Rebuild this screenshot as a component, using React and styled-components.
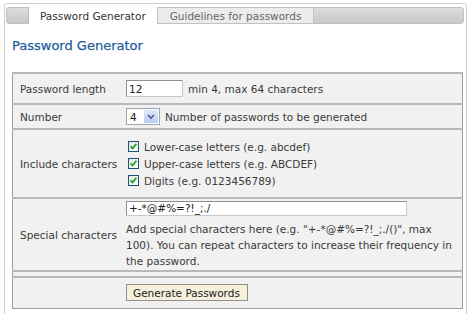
import React from "react";
import styled, { createGlobalStyle } from "styled-components";

const Global = createGlobalStyle`
  html, body { margin: 0; padding: 0; background: #fff; }
  body { font-family: "DejaVu Sans", Verdana, sans-serif; font-size: 10.5px; color: #3a3a3a; }
`;

const Page = styled.div`
  padding: 3px 7px 0 4px;
  height: 311px;
  overflow: hidden;
`;

const Panel = styled.div`
  border: 1px solid #cfcfcf;
  border-radius: 3px 3px 0 0;
  padding: 3px 2px 0 1px;
  height: 330px;
`;

const TabBar = styled.div`
  display: flex;
  height: 17px;
  background: linear-gradient(#dcdcdc, #c9c9c9);
  border: 1px solid #c0c0c0;
  border-radius: 3px;
  box-sizing: border-box;
`;

const TabStub = styled.div`
  width: 21px;
  border-right: 1px solid #bdbdbd;
`;

const Tab = styled.div`
  display: flex;
  align-items: center;
  padding: 0 ${(p) => (p.$active ? "11px" : "12px")};
  height: ${(p) => (p.$active ? "17px" : "15px")};
  margin-top: ${(p) => (p.$active ? "-1px" : "0")};
  background: ${(p) => (p.$active ? "#fff" : "#ececec")};
  color: ${(p) => (p.$active ? "#333" : "#666")};
  border-right: 1px solid #c4c4c4;
  white-space: nowrap;
`;

const Content = styled.div`
  padding: 0 4px 0 6px;
`;

const Heading = styled.h1`
  margin: 13px 0 0 0;
  height: 35px;
  font-size: 13px;
  font-weight: normal;
  color: #1f5d9c;
  line-height: 17px;
  -webkit-text-stroke: 0.25px #1f5d9c;
`;

const Table = styled.table`
  width: 451px;
  border-collapse: collapse;
  border: 1px solid #9c9c9c;
  background: #f1f1f1;
`;

const Row = styled.tr`
  height: ${(p) => p.$h}px;
  border-top: 2px solid #b9b9b9;
`;

const Label = styled.td`
  width: 104px;
  padding: 0 0 0 7px;
  vertical-align: middle;
  white-space: nowrap;
`;

const Value = styled.td`
  padding: 0 6px 0 5px;
  vertical-align: middle;
  line-height: 16px;
`;

const Inline = styled.div`
  display: flex;
  align-items: center;
  gap: 5px;
`;

const TextInput = styled.div`
  box-sizing: border-box;
  width: ${(p) => p.$w}px;
  height: ${(p) => p.$h}px;
  border: 1px solid #8e8e8e;
  border-right-color: #c8c8c8;
  border-bottom-color: #c8c8c8;
  background: #fff;
  padding-left: 2px;
  display: flex;
  align-items: center;
  white-space: nowrap;
  color: #222;
`;

const Select = styled.div`
  box-sizing: border-box;
  width: 34px;
  height: 17px;
  border: 1px solid #9aa5b5;
  background: #fff;
  display: flex;
  align-items: stretch;
  color: #222;
`;

const SelectValue = styled.div`
  flex: 1;
  display: flex;
  align-items: center;
  padding-left: 3px;
`;

const SelectButton = styled.div`
  width: 14px;
  margin: 1px;
  background: linear-gradient(#dfe8fd, #b9cdf7);
  border-radius: 1px;
  display: flex;
  align-items: center;
  justify-content: center;
`;

const CheckList = styled.div`
  display: flex;
  flex-direction: column;
  gap: 1px;
`;

const CheckLine = styled.div`
  display: flex;
  align-items: center;
  gap: 5px;
  padding-left: 2px;
  height: 16px;
`;

const Box = styled.span`
  box-sizing: border-box;
  width: 11px;
  height: 11px;
  border: 1px solid #1d4f7d;
  background: linear-gradient(135deg, #e6e6e0, #fff);
  display: inline-flex;
  align-items: center;
  justify-content: center;
`;

const Help = styled.div`
  margin-top: 5px;
  width: 330px;
  line-height: 16px;
`;

const Button = styled.div`
  display: inline-flex;
  align-items: center;
  height: 17px;
  box-sizing: border-box;
  padding: 0 7px 0 6px;
  background: #f4f0dc;
  border: 1px solid #8f8f8f;
  color: #222;
`;

function Checkbox() {
  return (
    <Box>
      <svg width="9" height="9" viewBox="0 0 9 9">
        <path d="M1.6 4.3 L3.6 6.4 L7.4 1.8" fill="none" stroke="#21a121" strokeWidth="1.8" />
      </svg>
    </Box>
  );
}

export default function App() {
  return (
    <Page>
      <Global />
      <Panel>
        <TabBar>
          <TabStub />
          <Tab $active>Password Generator</Tab>
          <Tab>Guidelines for passwords</Tab>
        </TabBar>
        <Content>
          <Heading>Password Generator</Heading>
          <Table>
            <tbody>
              <Row $h={31}>
                <Label>Password length</Label>
                <Value>
                  <Inline>
                    <TextInput $w={57} $h={17}>12</TextInput>
                    <span>min 4, max 64 characters</span>
                  </Inline>
                </Value>
              </Row>
              <Row $h={25}>
                <Label>Number</Label>
                <Value>
                  <Inline>
                    <Select>
                      <SelectValue>4</SelectValue>
                      <SelectButton>
                        <svg width="8" height="6" viewBox="0 0 8 6">
                          <path d="M1 1 L4 4 L7 1" fill="none" stroke="#4c5f88" strokeWidth="1.6" />
                        </svg>
                      </SelectButton>
                    </Select>
                    <span>Number of passwords to be generated</span>
                  </Inline>
                </Value>
              </Row>
              <Row $h={69}>
                <Label>Include characters</Label>
                <Value>
                  <CheckList>
                    <CheckLine><Checkbox />Lower-case letters (e.g. abcdef)</CheckLine>
                    <CheckLine><Checkbox />Upper-case letters (e.g. ABCDEF)</CheckLine>
                    <CheckLine><Checkbox />Digits (e.g. 0123456789)</CheckLine>
                  </CheckList>
                </Value>
              </Row>
              <Row $h={73}>
                <Label>Special characters</Label>
                <Value>
                  <TextInput $w={281} $h={15}>+-*@#%=?!_;./</TextInput>
                  <Help>
                    Add special characters here (e.g. "+-*@#%=?!_;./()", max 100). You can repeat characters to increase their frequency in the password.
                  </Help>
                </Value>
              </Row>
              <Row $h={6}>
                <Label />
                <Value />
              </Row>
              <Row $h={31}>
                <Label />
                <Value>
                  <Button>Generate Passwords</Button>
                </Value>
              </Row>
            </tbody>
          </Table>
        </Content>
      </Panel>
    </Page>
  );
}
